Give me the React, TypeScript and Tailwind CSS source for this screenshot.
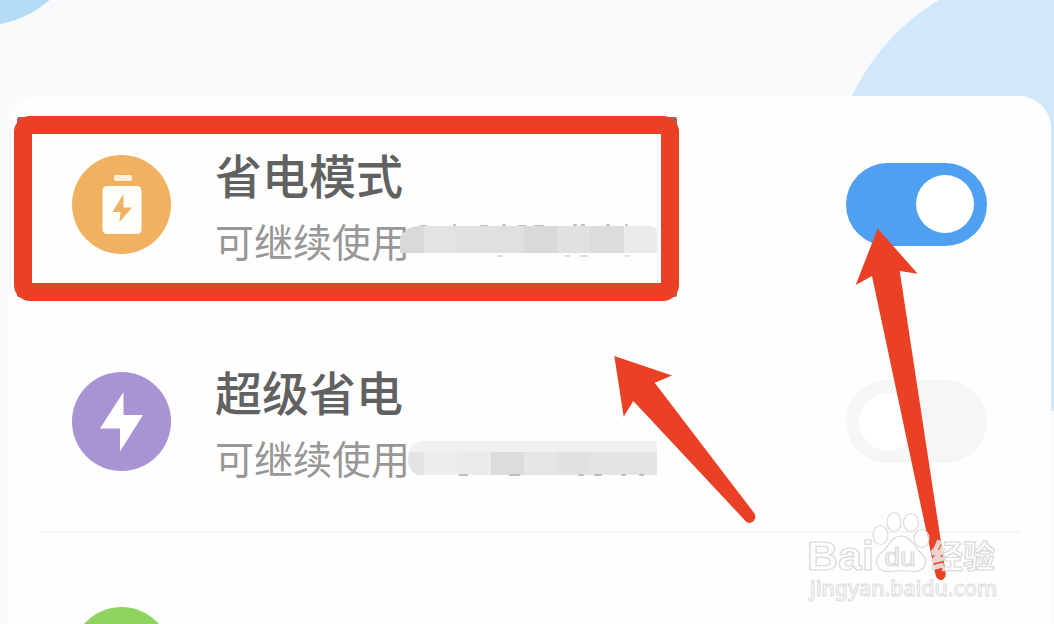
import React from 'react';
import { clsx } from 'clsx';

interface Block {
  x: number;
  width: number;
  fill: string;
}

interface ToggleProps {
  checked?: boolean;
}

interface ModeRowProps {
  icon: React.ReactNode;
  iconClass: string;
  title?: string;
  subtitle?: string;
  masked?: React.ReactNode;
  checked?: boolean;
  className?: string;
}

const Toggle: React.FC<ToggleProps> = ({ checked = false }) => (
  <button
    type="button"
    role="switch"
    aria-checked={checked}
    className={clsx(
      'flex h-[83px] w-[141px] shrink-0 items-center rounded-full px-[13px]',
      checked ? 'justify-end bg-[#50a0f2]' : 'justify-start bg-[#f6f6f6]'
    )}
  >
    <span className="size-[58px] rounded-full bg-white" />
  </button>
);

const BatteryIcon = () => (
  <svg className="size-[99px]" viewBox="0 0 99 99">
    <rect x="42" y="20" width="18" height="6" rx="2" fill="#fff1d9" />
    <rect x="30.5" y="31" width="39" height="48" rx="4.5" fill="#fffdf8" />
    <path d="M51.500 39 L40.500 57 H48.500 L47.500 67 L60 52.500 H51.500 Z" fill="#f0b160" />
  </svg>
);

const BoltIcon = () => (
  <svg className="size-[99px]" viewBox="0 0 99 99">
    <path d="M51.500 20 L28 56.500 H48 V79.500 L71 43 H51.500 Z" fill="#fff" />
  </svg>
);

const topBlocks: Block[] = [
  { x: 0, width: 24, fill: '#d9d9d9' },
  { x: 24, width: 33, fill: '#e3e3e3' },
  { x: 57, width: 67, fill: '#e0e0e0' },
  { x: 124, width: 33, fill: '#d9d9d9' },
  { x: 157, width: 33, fill: '#e1e1e1' },
  { x: 190, width: 34, fill: '#dcdcdc' },
  { x: 224, width: 33, fill: '#ebebeb' },
];

const bottomBlocks: Block[] = [
  { x: 0, width: 24, fill: '#e4e4e4' },
  { x: 24, width: 33, fill: '#eeeeee' },
  { x: 57, width: 34, fill: '#ebebeb' },
  { x: 91, width: 33, fill: '#dcdcdc' },
  { x: 124, width: 33, fill: '#e5e5e5' },
  { x: 157, width: 33, fill: '#e1e1e1' },
  { x: 190, width: 67, fill: '#e4e4e4' },
];

// Bits of the hidden digits that stick out around the mask
const Specks: React.FC<{ points: [number, number, number][] }> = ({ points }) => (
  <>
    {points.map(([x, y, w]) => (
      <rect key={`${x}-${y}`} x={x} y={y} width={w} height="2" rx="1" fill="#bdbdbd" />
    ))}
  </>
);

const TopMask = () => (
  <svg className="h-[34px] w-[257px]" viewBox="0 0 257 34">
    <Specks points={[[20, 2, 7], [53, 1, 3], [80, 2, 8], [102, 1, 4], [118, 2, 8], [134, 2, 10], [173, 1, 4], [181, 1, 4], [206, 1, 4], [225, 1, 3]]} />
    <clipPath id="top-mask">
      <path d="M0 15 Q6 3 20 3 H250 Q257 3 257 10 V30 H0 Z" />
    </clipPath>
    <g clipPath="url(#top-mask)">
      {topBlocks.map((b) => (
        <rect key={b.x} x={b.x} y="0" width={b.width} height="34" fill={b.fill} />
      ))}
    </g>
    <g opacity="0.5">
      <Specks points={[[97, 32, 6], [165, 32, 5], [180, 32, 8], [225, 32, 4]]} />
    </g>
  </svg>
);

const BottomMask = () => (
  <svg className="h-[38px] w-[257px]" viewBox="0 0 257 38">
    <clipPath id="bottom-mask">
      <path d="M8 20 Q10 3 25 3 H257 V37 H18 Q8 34 8 20 Z" />
    </clipPath>
    <g clipPath="url(#bottom-mask)">
      <rect width="257" height="16" fill="#f1f1f1" />
      {bottomBlocks.map((b) => (
        <rect key={b.x} x={b.x} y="14" width={b.width} height="23" fill={b.fill} />
      ))}
    </g>
    <Specks points={[[59, 36, 9], [109, 36, 11], [178, 36, 6], [194, 36, 8], [221, 36, 5], [239, 36, 5]]} />
  </svg>
);

const ModeRow: React.FC<ModeRowProps> = ({
  icon,
  iconClass,
  title,
  subtitle,
  masked,
  checked,
  className,
}) => (
  <div className={clsx('flex items-center pr-16 pl-16', className)}>
    <div className={clsx('size-[99px] shrink-0 rounded-full', iconClass)}>{icon}</div>
    {title && (
      <>
        <div className="ml-11 flex-1 pt-2">
          <h2 className="pb-[7px] text-[47px] leading-[56px] font-medium text-[#616161]">{title}</h2>
          <div className="flex items-center">
            <p className="w-[185px] text-[39px] leading-[62px] whitespace-nowrap text-[#979797]">
              {subtitle}
            </p>
            <div className="z-10">{masked}</div>
          </div>
        </div>
        <Toggle checked={checked} />
      </>
    )}
  </div>
);

const Watermark = () => (
  <svg
    className="absolute top-[500px] left-[790px] h-[124px] w-[230px]"
    viewBox="790 500 230 124"
    fontFamily="'Liberation Sans', 'Noto Sans CJK SC', sans-serif"
  >
    <g fill="#ffffff" fillOpacity="0.75" stroke="#d9d9d9" strokeWidth="1.2">
      <ellipse cx="880.500" cy="535" rx="7.500" ry="9.500" />
      <ellipse cx="894" cy="522" rx="7" ry="9.500" />
      <ellipse cx="911" cy="522.500" rx="7.500" ry="9" />
      <ellipse cx="921.500" cy="538.500" rx="7.500" ry="9" />
      <path d="M901 536 C891 536 889 547 882 552 C873 559 876 572 889 571.500 C897 570.500 905 570.500 913 571.500 C927 572 929 559 920 552 C913 546 911 536 901 536 Z" />
      <g fontWeight="bold">
        <text x="807" y="570" fontSize="41" textLength="67" lengthAdjust="spacingAndGlyphs">Bai</text>
        <text x="884.500" y="565.500" fontSize="25" fontWeight="normal" textLength="31" lengthAdjust="spacingAndGlyphs">du</text>
        <text x="931" y="567.500" fontSize="32" textLength="64" lengthAdjust="spacingAndGlyphs">经验</text>
      </g>
      <text x="810" y="595.500" fontSize="21" fontFamily="'Noto Sans', sans-serif" fontWeight="500" textLength="187" lengthAdjust="spacingAndGlyphs" strokeWidth="0.9">jingyan.baidu.com</text>
    </g>
  </svg>
);

const Arrows = () => (
  <svg className="absolute inset-0 h-full w-full" viewBox="0 0 1054 624" fill="#ea4025">
    <path d="M614.300 356 L672 375.500 L654.700 382.700 L754.500 513.500 C758 518.500 751 526 746 521.500 L633.300 401 L623.700 416.700 Z" />
    <path d="M877.700 228.500 L917.700 273.700 L899.700 271 L945.700 573 C946 582 936.500 582 935.500 574.500 L872 276 L855.700 285 Z" />
  </svg>
);

export default function App() {
  return (
    <div className="relative flex h-[624px] w-[1054px] flex-col overflow-hidden bg-[#f8fafc] pt-24 pr-[3px] pl-2 font-['Noto_Sans_CJK_SC',sans-serif]">
      <svg className="absolute inset-0 h-full w-full" viewBox="0 0 1054 624">
        <circle cx="-20" cy="-80" r="106" fill="#b4dcf4" />
        <circle cx="1052" cy="190" r="221" fill="#d0e8fa" />
      </svg>

      <main className="relative h-[528px] overflow-hidden rounded-t-[32px] bg-[#fefefe]">
        <ModeRow
          className="h-[216px]"
          icon={<BatteryIcon />}
          iconClass="bg-[#f0b160]"
          title="省电模式"
          subtitle="可继续使用"
          masked={<TopMask />}
          checked
        />
        <ModeRow
          className="h-[219px]"
          icon={<BoltIcon />}
          iconClass="bg-[#a893d3]"
          title="超级省电"
          subtitle="可继续使用"
          masked={<BottomMask />}
        />
        <div className="mx-8 h-0.5 bg-[#f5f5f5]" />
        <ModeRow className="h-[246px]" icon={null} iconClass="bg-[#8ed45f]" />
      </main>

      {/* Highlight frame around the first mode */}
      <div className="absolute top-[117px] left-[17px] h-[180px] w-[660px] rounded-[2px] border-[14px] border-[#a3605c]" />
      <div className="absolute top-[116px] left-[14px] h-[185px] w-[665px] rounded-[16px] border-[18px] border-[#ea4025]" />

      <Arrows />
      <Watermark />
    </div>
  );
}
